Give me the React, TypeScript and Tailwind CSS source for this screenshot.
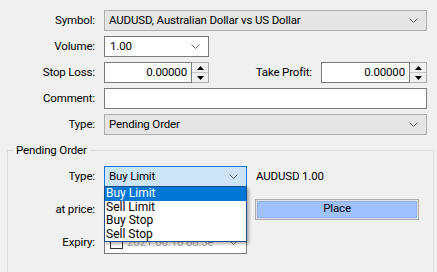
import React from "react";

const font = { fontFamily: 'Roboto, "Liberation Sans", sans-serif' };

function Chevron({ color = "#606060" }: { color?: string }) {
  return (
    <svg width="9" height="6" viewBox="0 0 9 6" className="shrink-0">
      <polyline points="0.5,0.5 4.5,4.5 8.5,0.5" fill="none" stroke={color} strokeWidth="1" />
    </svg>
  );
}

function Label({ children, className = "" }: { children: React.ReactNode; className?: string }) {
  return <div className={`w-[96px] shrink-0 pr-[1px] text-right ${className}`}>{children}</div>;
}

function Spinner() {
  return (
    <div className="flex h-full w-[17px] shrink-0 flex-col border border-l-0 border-[#adadad] bg-[#f0f0f0]">
      <div className="flex flex-1 items-center justify-center border-b border-[#c8c8c8]">
        <svg width="7" height="4" viewBox="0 0 7 4">
          <polygon points="3.5,0 7,4 0,4" fill="#000" />
        </svg>
      </div>
      <div className="flex flex-1 items-center justify-center">
        <svg width="7" height="4" viewBox="0 0 7 4">
          <polygon points="0,0 7,0 3.5,4" fill="#000" />
        </svg>
      </div>
    </div>
  );
}

function PriceInput() {
  return (
    <div className="flex h-full w-full">
      <div className="flex flex-1 items-center justify-end border border-[#7a7a7a] bg-white pr-[4px]">0.00000</div>
      <Spinner />
    </div>
  );
}

export default function App() {
  return (
    <div
      className="h-[272px] w-[437px] overflow-hidden bg-[#f0f0f0] text-[11.5px] tracking-[-0.15px] text-black"
      style={font}
    >
      {/* Order fields */}
      <div className="flex flex-col gap-[5px] pt-[10px] pr-[10px]">
        <div className="flex h-[21px] items-center gap-[8px]">
          <Label>Symbol:</Label>
          <div className="flex h-full flex-1 items-center justify-between border border-[#adadad] bg-[#e5e5e5] pl-[4px] pr-[8px]">
            <span>AUDUSD, Australian Dollar vs US Dollar</span>
            <Chevron />
          </div>
        </div>
        <div className="flex h-[21px] items-center gap-[8px]">
          <Label>Volume:</Label>
          <div className="flex h-full w-[105px] items-center justify-between border border-[#7a7a7a] bg-white pl-[5px] pr-[8px]">
            <span>1.00</span>
            <Chevron />
          </div>
        </div>
        <div className="flex h-[21px] items-center gap-[8px]">
          <Label>Stop Loss:</Label>
          <div className="h-full w-[105px]">
            <PriceInput />
          </div>
          <div className="flex-1 pr-[1px] text-right">Take Profit:</div>
          <div className="h-full w-[106px]">
            <PriceInput />
          </div>
        </div>
        <div className="flex h-[21px] items-center gap-[8px]">
          <Label>Comment:</Label>
          <div className="h-full flex-1 border border-[#7a7a7a] bg-white" />
        </div>
        <div className="flex h-[21px] items-center gap-[8px]">
          <Label>Type:</Label>
          <div className="flex h-full flex-1 items-center justify-between border border-[#adadad] bg-[#e5e5e5] pl-[4px] pr-[8px]">
            <span>Pending Order</span>
            <Chevron />
          </div>
        </div>
      </div>

      {/* Pending Order group */}
      <fieldset className="ml-[7px] mr-[3px] mt-[7px] h-[140px] border border-[#dcdcdc] p-0">
        <legend className="ml-[5px] px-[3px] leading-[16px]">Pending Order</legend>
        <div className="relative -ml-[8px] flex flex-col gap-[12px] pt-[8px]">
          <div className="flex h-[21px] items-center gap-[8px]">
            <Label>Type:</Label>
            <div className="relative h-full w-[143px]">
              <div className="flex h-full items-center justify-between border border-[#0078d7] bg-[#cce4f7] pl-[4px] pr-[8px]">
                <span>Buy Limit</span>
                <Chevron />
              </div>
              {/* open dropdown list */}
              <div className="absolute left-0 top-[20px] z-10 w-[143px] border border-[#1b4f8a] bg-white text-[12px] leading-[13.5px] tracking-normal shadow-[2px_2px_3px_rgba(0,0,0,0.3)]">
                <div className="bg-[#0078d7] pl-[1px] text-white">Buy Limit</div>
                <div className="pl-[1px]">Sell Limit</div>
                <div className="pl-[1px]">Buy Stop</div>
                <div className="pl-[1px]">Sell Stop</div>
              </div>
            </div>
            <div className="pl-[1px]">AUDUSD 1.00</div>
          </div>
          <div className="flex h-[21px] items-center gap-[8px]">
            <Label>at price:</Label>
            <div className="h-full w-[143px] border border-[#7a7a7a] bg-white" />
            <div className="h-[21px] w-[164px] border border-[#adadad] bg-[#e1e1e1] p-[1px]">
              <div className="flex h-full items-center justify-center border border-[#90b0f0] bg-[#a0c0ff] pb-[1px]">
                Place
              </div>
            </div>
          </div>
          <div className="flex h-[21px] items-center gap-[8px]">
            <Label>Expiry:</Label>
            <div className="flex h-[22px] w-[143px] items-center border border-[#7a7a7a] bg-white pl-[5px] pr-[8px]">
              <div className="h-[13px] w-[13px] shrink-0 border border-[#333] bg-white" />
              <span className="ml-[4px] flex-1 text-[#a0a0a0]">2021.06.16 08:3e</span>
              <Chevron />
            </div>
          </div>
        </div>
      </fieldset>
    </div>
  );
}
